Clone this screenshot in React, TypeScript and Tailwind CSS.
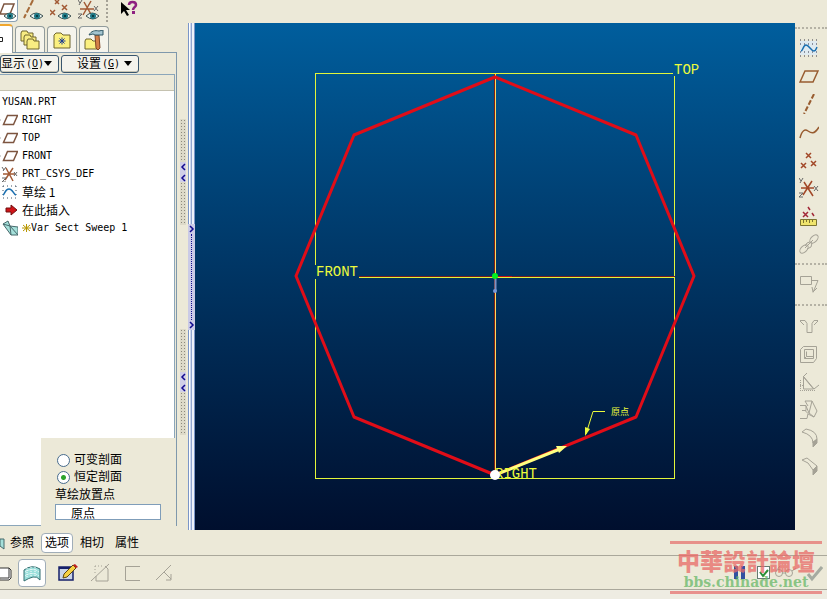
import type { ReactNode } from "react";

const brown = "#7d5540";
const gray = "#a5a296";

function Icon({ children, w = 20, h = 20 }: { children: ReactNode; w?: number; h?: number }) {
  return (
    <svg width={w} height={h} viewBox={`0 0 ${w} ${h}`} fill="none" aria-hidden="true" className="shrink-0">
      {children}
    </svg>
  );
}

function Eye() {
  return (
    <g>
      <path d="M8 16q6-6 13 0q-6 6-13 0z" fill="#e8f2f0" stroke="#3c5050" />
      <circle cx="15" cy="16" r="3" fill="#1e7885" />
      <circle cx="15" cy="16" r="1" fill="#052a30" />
    </g>
  );
}

/* feature tree icons, 18 x 16 */
const PlaneIcon = () => (
  <Icon w={18} h={16}>
    <path d="M0 8h2" stroke="#aaa" strokeDasharray="1 1" />
    <path d="M7.500 3.500h10l-4 9h-10z" stroke={brown} strokeWidth="1.500" />
  </Icon>
);

const CsysIcon = () => (
  <Icon w={18} h={16}>
    <path d="M3 8h12M6 2l7 13M13 2L5 14" stroke="#a25a35" strokeWidth="1.500" />
    <path d="M2 1l2 3M6 1L3 5M2 12h4l-4 4h4M14 6l3 4M17 6l-3 4" stroke="#666" />
  </Icon>
);

const SketchIcon = () => (
  <Icon w={18} h={16}>
    <path d="M3 2h14M3 14h14M3 2v12M16 2v12" stroke="#456" strokeDasharray="1 3" />
    <path d="M3 11c2-1 2-6 6-6s4 5 7 6" stroke="#1a6fb0" strokeWidth="1.500" />
  </Icon>
);

const InsertIcon = () => (
  <Icon w={18} h={16}>
    <path d="M6 6h5V3l6 5l-6 5v-3H6z" fill="#cf1418" stroke="#701010" />
  </Icon>
);

const SweepIcon = () => (
  <Icon w={18} h={16}>
    <path d="M3 4l5-3l2 5l8 1v8h-7z" fill="#a5e0da" stroke="#47686b" />
    <path d="M10 6l1 9M10 6l8 9M3 4l7 2" stroke="#47686b" />
  </Icon>
);

const tree = [
  { icon: <PlaneIcon />, label: "RIGHT" },
  { icon: <PlaneIcon />, label: "TOP" },
  { icon: <PlaneIcon />, label: "FRONT" },
  { icon: <CsysIcon />, label: "PRT_CSYS_DEF" },
  { icon: <SketchIcon />, label: "草绘 1", cjk: true },
  { icon: <InsertIcon />, label: "在此插入", cjk: true },
  { icon: <SweepIcon />, label: "Var Sect Sweep 1", star: true },
];

function TopBar() {
  return (
    <header className="flex h-[23px] items-start overflow-hidden">
      <button aria-label="Plane display" className="h-[22px] w-[18px] rounded-br border-r border-b border-[#8aa0b4] bg-white">
        <Icon w={17} h={21}>
          <path d="M4 4h10l-4 10H0z" stroke={brown} strokeWidth="1.500" />
          <path d="M4 16q6-6 12 0q-6 6-12 0z" fill="#e8f2f0" stroke="#3c5050" />
          <circle cx="10" cy="16" r="3" fill="#1e7885" />
          <circle cx="10" cy="16" r="1" fill="#052a30" />
        </Icon>
      </button>
      <button aria-label="Axis display" className="ml-1 w-6">
        <Icon w={22} h={22}>
          <path d="M11 0L2 18" stroke="#a56a38" strokeWidth="2" strokeDasharray="6 2" />
          <Eye />
        </Icon>
      </button>
      <button aria-label="Point display" className="ml-1 w-6">
        <Icon w={22} h={22}>
          <path d="M5 0l4 4M9 0L5 4M0 10l5 5M5 10l-5 5M12 5l5 5M17 5l-5 5" stroke="#a25a35" strokeWidth="1.500" />
          <Eye />
        </Icon>
      </button>
      <button aria-label="Csys display" className="ml-1 w-6">
        <Icon w={22} h={22}>
          <path d="M2 9h14M6 2l8 14M13 1L5 15" stroke="#a25a35" strokeWidth="1.500" />
          <path d="M0 0l2 3M4 0L1 5M0 14h4l-4 4h4M16 6l4 5M20 6l-4 5" stroke="#666" />
          <Eye />
        </Icon>
      </button>
      <span className="ml-1 h-[22px] border-l-2 border-dotted border-[#a5a296]" />
      <button aria-label="Context help" className="ml-3">
        <Icon w={22} h={20}>
          <path d="M1 2v12l3-3l3 5l2-1l-3-5h4z" fill="#000" />
          <path d="M9 5c0-4 7-4 7 0c0 2-3 2-3 5" stroke="#8e2080" strokeWidth="2.500" />
          <path d="M12 11h3v3h-3z" fill="#8e2080" />
        </Icon>
      </button>
    </header>
  );
}

function Tabs() {
  const tab = "flex h-[26px] w-[30px] items-center justify-center rounded-t border border-b-0 border-[#919b9c] bg-[#f5f4ec]";
  return (
    <div className="flex h-[30px] items-end gap-[2px] border-b border-[#7f98ac]">
      <button aria-label="Model tree" className="-mb-px h-[29px] w-[13px] rounded-tr border-t-2 border-r border-t-[#f0a62e] border-r-[#919b9c] bg-white">
        <Icon w={12} h={26}>
          <path d="M0 10.500h2.500v4H0" stroke="#222" />
        </Icon>
      </button>
      <button aria-label="Folders" className={tab}>
        <Icon>
          <path d="M1 3l1-2h5l1 2h5v8H1z" fill="#f8ec82" stroke="#6f652d" />
          <path d="M4 7l1-2h5l1 2h5v8H4z" fill="#f8ec82" stroke="#6f652d" />
          <path d="M7 11l1-2h5l1 2h5v8H7z" fill="#f8ec82" stroke="#6f652d" />
        </Icon>
      </button>
      <button aria-label="Favorites" className={tab}>
        <Icon>
          <path d="M2 5l2-2h5l2 2h7v13H2z" fill="#fbf080" stroke="#6f652d" />
          <path d="M10 7.500v7M6.500 11h7M7.500 8.500l5 5M12.500 8.500l-5 5" stroke="#204090" />
        </Icon>
      </button>
      <button aria-label="Connections" className={tab}>
        <Icon>
          <path d="M1 11l1-2h5l2 2h6v8H1z" fill="#fbf080" stroke="#6f652d" />
          <path d="M11 5h4l1 13l-2 2l-2-2z" fill="#d48048" stroke="#804624" />
          <path d="M5 5c2-4 6-5 10-4l4-1v5h-8l-2-1z" fill="#a4c4cf" stroke="#315966" />
        </Icon>
      </button>
    </div>
  );
}

function LeftPanel() {
  const menu = "flex h-[18px] items-center rounded-[3px] border border-[#39566e] bg-[#f4f3ec] text-xs leading-4 shadow-[inset_0_-1px_0_#c9c6b5]";
  const key = "font-['DejaVu_Sans_Mono',monospace] text-[10px]";
  return (
    <aside className="relative flex w-[177px] shrink-0 flex-col pb-1">
      <Tabs />
      <div className="flex grow flex-col border-r border-[#7f98ac]">
        <div className="flex h-[21px] items-center gap-[2px]">
          <button className={`${menu} w-[59px] justify-between pr-1.5`}>
            <span className="flex items-center gap-px whitespace-nowrap">显示<span className={key}>(<u>O</u>)</span></span>
            <Icon w={8} h={5}><path d="M0 0h8L4 5z" fill="#000" /></Icon>
          </button>
          <button className={`${menu} w-[78px] justify-end gap-1 pr-1.5`}>
            <span className="flex items-center gap-px whitespace-nowrap">设置<span className={key}>(<u>G</u>)</span></span>
            <Icon w={8} h={5}><path d="M0 0h8L4 5z" fill="#000" /></Icon>
          </button>
        </div>
        <div className="mr-px flex grow flex-col border-t border-r border-b border-[#8ba6ba] bg-white">
          <div className="h-4 border-b border-[#c5c2b0] bg-[#ece9d8]" />
          <div className="pt-0.5 font-['DejaVu_Sans_Mono','Noto_Sans_CJK_SC',monospace] text-[10px]">
            <div className="h-[18px] pl-0.5 leading-[18px]">YUSAN.PRT</div>
            <ul>
              {tree.map((item) => (
                <li key={item.label} className="flex h-[18px] items-center whitespace-pre leading-[18px]">
                  <span className="mr-1">{item.icon}</span>
                  {item.star && (
                    <Icon w={9} h={10}>
                      <path d="M4.500 1v8M0 5h9M1 2l7 6M8 2L1 8" stroke="#b79600" />
                    </Icon>
                  )}
                  <span className={item.cjk ? "font-['Noto_Sans_CJK_SC',sans-serif] text-xs leading-4" : ""}>{item.label}</span>
                </li>
              ))}
            </ul>
          </div>
        </div>
      </div>
      <OptionsPopup />
    </aside>
  );
}

/* slide-up panel of the Options tab, lies over the model tree */
function OptionsPopup() {
  return (
    <form className="absolute right-[2px] bottom-0 left-[41px] h-[92px] bg-[#ece9d8] pt-[14px] pl-4 text-xs leading-[17px]">
      <label className="flex h-[17px] items-center gap-1">
        <input type="radio" name="section" className="size-[13px] appearance-none rounded-full border border-[#476b8c] bg-white" />
        可变剖面
      </label>
      <label className="flex h-[17px] items-center gap-1">
        <input
          type="radio"
          name="section"
          defaultChecked
          className="size-[13px] appearance-none rounded-full border border-[#476b8c] bg-white checked:bg-[radial-gradient(circle,#2ba32b_2px,#fff_3px)]"
        />
        恒定剖面
      </label>
      <label htmlFor="placement" className="-ml-0.5 mt-px block">草绘放置点</label>
      <input
        id="placement"
        defaultValue="原点"
        className="-ml-0.5 block h-4 w-[106px] border border-[#7f9db9] bg-white pl-[15px] text-xs leading-3"
      />
    </form>
  );
}

function Grip() {
  return (
    <div className="flex h-[106px] w-1.5 flex-col items-center justify-center bg-[radial-gradient(#8c897c_1px,#dddac9_1px)] bg-size-[3px_3px]">
      <Icon w={6} h={20}>
        <path d="M0 0h6v20H0z" fill="#d0cfe8" />
        <path d="M5 2L2 5l3 3M5 13l-3 3l3 3" stroke="#120a8f" strokeWidth="1.500" />
      </Icon>
    </div>
  );
}

function Splitters() {
  return (
    <>
      <div className="flex w-[11px] shrink-0 flex-col items-center justify-center gap-[104px]">
        <Grip />
        <Grip />
      </div>
      <div className="flex w-[7px] shrink-0 flex-col items-center justify-center border-x border-[#7b96c8] bg-[linear-gradient(90deg,#fff_1px,#ccd8ee_1px,#ccd8ee_2px,#8fa5d0_2px,#8fa5d0_3px,#eef2fa_3px)]">
        <button aria-label="Collapse panel" className="flex h-[106px] w-[7px] flex-col items-center bg-[#cbcbe6]">
          <Icon w={6} h={10}><path d="M1 2l3 3l-3 3" stroke="#120a8f" strokeWidth="1.500" /></Icon>
          <span className="grow border-l border-dotted border-[#120a8f]" />
          <Icon w={6} h={10}><path d="M1 2l3 3l-3 3" stroke="#120a8f" strokeWidth="1.500" /></Icon>
        </button>
      </div>
    </>
  );
}

function Viewport() {
  const label = "font-['Liberation_Mono',monospace] text-[14px]";
  return (
    <main className="min-w-0 grow bg-linear-to-b from-[#005e9d] to-[#000f2e]">
      <svg viewBox="195 23 600 507" className="block size-full" fill="none">
        <g stroke="#e2f53a" shapeRendering="crispEdges">
          <path d="M673 73.500H315.500V265M315.500 279V478.500H674.500V76" />
          <path d="M359 277.500H675" />
        </g>
        <path d="M359 276.500H675" stroke="#781c20" shapeRendering="crispEdges" />
        <path d="M494.500 74V475" stroke="#802010" shapeRendering="crispEdges" />
        <path d="M495.500 74V475" stroke="#ffd860" shapeRendering="crispEdges" />
        <path d="M495 77L636 135L694 276L636 417L495 475L354 417L296 276L354 135Z" stroke="#e00d18" strokeWidth="3" strokeLinejoin="round" />
        <path d="M495 475L560 449" stroke="#ffff80" strokeWidth="3" />
        <path d="M567 446L556 446L559 453Z" fill="#ffff80" />
        <path d="M605 411.500H593L586 434" stroke="#ecfb3c" />
        <path d="M585 436L585 427L590 429Z" fill="#ecfb3c" />
        <path d="M496 276.500h16" stroke="#c01018" />
        <path d="M495.500 279v12" stroke="#7d93c4" strokeWidth="2" />
        <circle cx="495" cy="291" r="2" fill="#7799d8" />
        <circle cx="495" cy="276" r="3" fill="#00f020" />
        <g fill="#ecfb3c">
          <text x="674" y="74" className={label}>TOP</text>
          <text x="316" y="276" className={label}>FRONT</text>
          <text x="495" y="478" className={label}>RIGHT</text>
          <text x="611" y="415" className="font-['Noto_Sans_CJK_SC',sans-serif] text-[9px]">原点</text>
        </g>
        <circle cx="495" cy="475" r="5" fill="#fff" />
      </svg>
    </main>
  );
}

const tools: { name: string; art: ReactNode }[] = [
  {
    name: "Sketch",
    art: (
      <>
        <path d="M1 3h17v14H1z" fill="#dfeaf0" />
        <path d="M1 2h18M1 6h18M1 14h18M1 18h18" stroke="#334" strokeDasharray="1 3" />
        <path d="M2 13c2 0 2-6 5-6s5 6 8 6c2 0 2-2 3-4" stroke="#1a6fb0" strokeWidth="1.500" />
      </>
    ),
  },
  { name: "Plane", art: <path d="M6 5h13l-5 11H1z" stroke="#985c30" strokeWidth="1.500" /> },
  { name: "Axis", art: <path d="M15 0L5 20" stroke="#985c30" strokeWidth="2" strokeDasharray="5 2" /> },
  { name: "Curve", art: <path d="M1 16c2-8 5-9 8-7s6 4 11-4" stroke="#985c30" strokeWidth="1.500" /> },
  {
    name: "Point",
    art: <path d="M7 3l5 5M12 3L7 8M2 13l5 5M7 13l-5 5M12 11l5 5M17 11l-5 5" stroke="#a24828" strokeWidth="1.500" />,
  },
  {
    name: "Coordinate system",
    art: (
      <>
        <path d="M2 10h13M5 4l9 14M13 3L4 17" stroke="#a24828" strokeWidth="1.500" />
        <path d="M0 0l2 3M4 0L1 5M0 15h4l-4 4h4M15 8l4 5M19 8l-4 5" stroke="#666" />
      </>
    ),
  },
  {
    name: "Analysis",
    art: (
      <>
        <path d="M4 6l5 5M9 6l-5 5M9 1l2 3M13 7l2 3" stroke="#a22838" strokeWidth="1.500" />
        <path d="M1.500 13.500h16v6h-16z" fill="#efe46c" stroke="#7c7430" />
        <path d="M4.500 14v3M7.500 14v2M10.500 14v3M13.500 14v2" stroke="#7c7430" />
      </>
    ),
  },
  {
    name: "Reference",
    art: (
      <g stroke={gray}>
        <ellipse cx="5" cy="15" rx="5" ry="3" transform="rotate(-45 5 15)" />
        <ellipse cx="15" cy="5" rx="5" ry="3" transform="rotate(-45 15 5)" />
        <path d="M6 12l2-3q3-2 5 0l-1 4l-4 2M6 14l8-8" />
      </g>
    ),
  },
];

const features: { name: string; art: ReactNode }[] = [
  { name: "Hole", art: <path d="M1 4.500h5l2 3v9h5v-9l2-3h4M1 5l4 4M19 5l-4 4" stroke={gray} /> },
  {
    name: "Shell",
    art: <path d="M1.500 5.500l3-3h13v12l-3 4h-13zM5.500 5.500h9v9h-9zM7.500 7.500v5h7M5.500 14.500l2-2" stroke={gray} />,
  },
  {
    name: "Rib",
    art: (
      <>
        <path d="M4.500 5v12h10zM4 5l4-4M15 17l5-4M5 5l10 12" stroke={gray} />
        <path d="M1 18.500h15M1.500 8v10M1 13.500h4" stroke={gray} strokeDasharray="1 1" />
      </>
    ),
  },
  { name: "Draft", art: <path d="M6 1h7l5 10l-3 6l-6-3M1 5.500h6v5H3M1 18.500h7l1-5l-3-3M6 1l3 5M13 1l-3 12M7 6l3 7l5 4" stroke={gray} /> },
  {
    name: "Round",
    art: (
      <>
        <path d="M3 4l4-3q11 2 11 10l-4 4q0-8-11-11z" stroke={gray} />
        <path d="M14 14l4-3v4l-4 4z" fill={gray} stroke={gray} />
      </>
    ),
  },
  {
    name: "Chamfer",
    art: (
      <>
        <path d="M3 4l5-2l10 8l-4 4l-5-7z" stroke={gray} />
        <path d="M14 14l4-4v5l-4 4z" fill={gray} stroke={gray} />
      </>
    ),
  },
];

function ToolStrip() {
  const line = "border-t-2 border-dotted border-[#b5b2a5]";
  return (
    <nav className="w-8 shrink-0 pt-1">
      <div className={line} />
      <div className="flex flex-col items-start gap-2 pt-[9px] pl-1">
        {tools.map((t) => (
          <button key={t.name} aria-label={t.name} className="h-5"><Icon>{t.art}</Icon></button>
        ))}
      </div>
      <div className={`${line} mt-[9px] pt-2 pl-1`}>
        <button aria-label="Replace" className="flex h-[31px] items-start">
          <Icon>
            <path d="M1.500 3.500h11v8h-11zM13 7.500h6l-5 12M13 14l1 5l4-4" stroke={gray} />
          </Icon>
        </button>
      </div>
      <div className={`${line} flex flex-col items-start gap-2 pt-2.5 pl-1`}>
        {features.map((t) => (
          <button key={t.name} aria-label={t.name} className="h-5"><Icon>{t.art}</Icon></button>
        ))}
      </div>
    </nav>
  );
}

function Dashboard() {
  return (
    <footer className="relative">
      <div className="flex h-[26px] items-center border-b border-[#aaa89b] text-xs leading-4">
        <Icon w={5} h={14}><path d="M0 3h4v10L0 10z" fill="#a5e0da" stroke="#47686b" /></Icon>
        <button className="ml-[5px] w-6">参照</button>
        <button className="ml-[7px] h-5 w-8 rounded border border-[#a0adb8] bg-white">选项</button>
        <button className="ml-[7px] w-6">相切</button>
        <button className="ml-[11px] w-6">属性</button>
      </div>
      <div className="flex h-[34px] items-center border-b border-[#aaa89b]">
        <button aria-label="Solid" className="w-[18px]">
          <Icon w={12} h={16}><path d="M0 3h9v10H0M9 3l2 2v8l-2 2H0" fill="#fff" stroke="#333" /></Icon>
        </button>
        <button aria-label="Surface" className="flex h-[28px] w-7 items-center justify-center rounded border border-[#a0adb8] bg-white">
          <Icon>
            <path d="M2 7q8-6 16-1v11q-3-4-7-3t-9 4z" fill="#9be0dc" stroke="#346e70" />
            <path d="M5 5v10M9 4v9M13 4v9M3 9q7-5 14 0M3 13q7-5 14 0" stroke="#fff" strokeDasharray="1 1" />
          </Icon>
        </button>
        <button aria-label="Edit section" className="ml-3">
          <Icon w={21}>
            <path d="M1 4h14v13H1z" fill="#c9d4e8" stroke="#16206a" strokeWidth="1.500" />
            <path d="M1 4h12v2H1z" fill="#16206a" />
            <path d="M5 15l1-4l9-9l3 3l-9 9z" fill="#f5d043" stroke="#5c4510" />
            <path d="M15 2l2-1l3 3l-2 1z" fill="#c02020" />
          </Icon>
        </button>
        <button disabled aria-label="Remove material" className="ml-3">
          <Icon><path d="M0 18L18 1M5 13v5h12V6l-3-3" stroke={gray} /><path d="M4 3h9M4 3v8" stroke={gray} strokeDasharray="1 2" /></Icon>
        </button>
        <button disabled aria-label="Thicken" className="ml-3">
          <Icon><path d="M17 3.500H2.500v14H17" stroke={gray} /></Icon>
        </button>
        <button disabled aria-label="Flip" className="ml-3">
          <Icon><path d="M1 17L16 2M9 9l7 7M16 11v6h-5" stroke={gray} /></Icon>
        </button>
        <div className="ml-auto flex items-center pr-1">
          <button aria-label="Pause" className="mr-3 flex gap-[3px]">
            <span className="h-[13px] w-1 bg-[#3150a0]" />
            <span className="h-[13px] w-1 bg-[#3150a0]" />
          </button>
          <input
            type="checkbox"
            defaultChecked
            aria-label="Preview"
            className="size-[13px] appearance-none border border-[#667b72] bg-white"
          />
          <span className="pointer-events-none -ml-3 flex">
            <Icon w={12} h={12}><path d="M2 5l3 4l5-6" stroke="#2b8e36" strokeWidth="2" /></Icon>
          </span>
          <button aria-label="Verify" className="ml-1">
            <Icon w={28}><circle cx="5" cy="10" r="3.500" stroke={gray} /><circle cx="15" cy="10" r="3.500" stroke={gray} /><path d="M8 10h4M2 8l4-5M18 8l4-3" stroke={gray} /></Icon>
          </button>
          <button disabled aria-label="Accept" className="ml-[3px]">
            <Icon w={18}><path d="M3 11l4 5l10-12" stroke="#a5aaa0" strokeWidth="3" /></Icon>
          </button>
        </div>
      </div>
      <div className="h-[9px] bg-[#eeece2]" />
      {/* forum stamp over the corner */}
      <div className="pointer-events-none absolute right-[5px] bottom-[5px] flex h-[53px] w-[152px] flex-col items-center border-y-[3px] border-[#e57370]/75 pt-0.5 whitespace-nowrap">
        <span className="h-7 font-['Noto_Sans_CJK_TC',sans-serif] text-[23px] leading-7 font-black text-[#e86a66]/75">中華設計論壇</span>
        <a href="#bbs" className="font-['DejaVu_Serif',serif] text-[14px] leading-4 font-bold text-[#68b868]/75">bbs.chinade.net</a>
      </div>
    </footer>
  );
}

export default function App() {
  return (
    <div className="flex min-h-screen flex-col bg-[#ece9d8] font-['Liberation_Sans','Noto_Sans_CJK_SC',sans-serif] text-black">
      <TopBar />
      <div className="flex grow">
        <LeftPanel />
        <Splitters />
        <Viewport />
        <ToolStrip />
      </div>
      <Dashboard />
    </div>
  );
}
